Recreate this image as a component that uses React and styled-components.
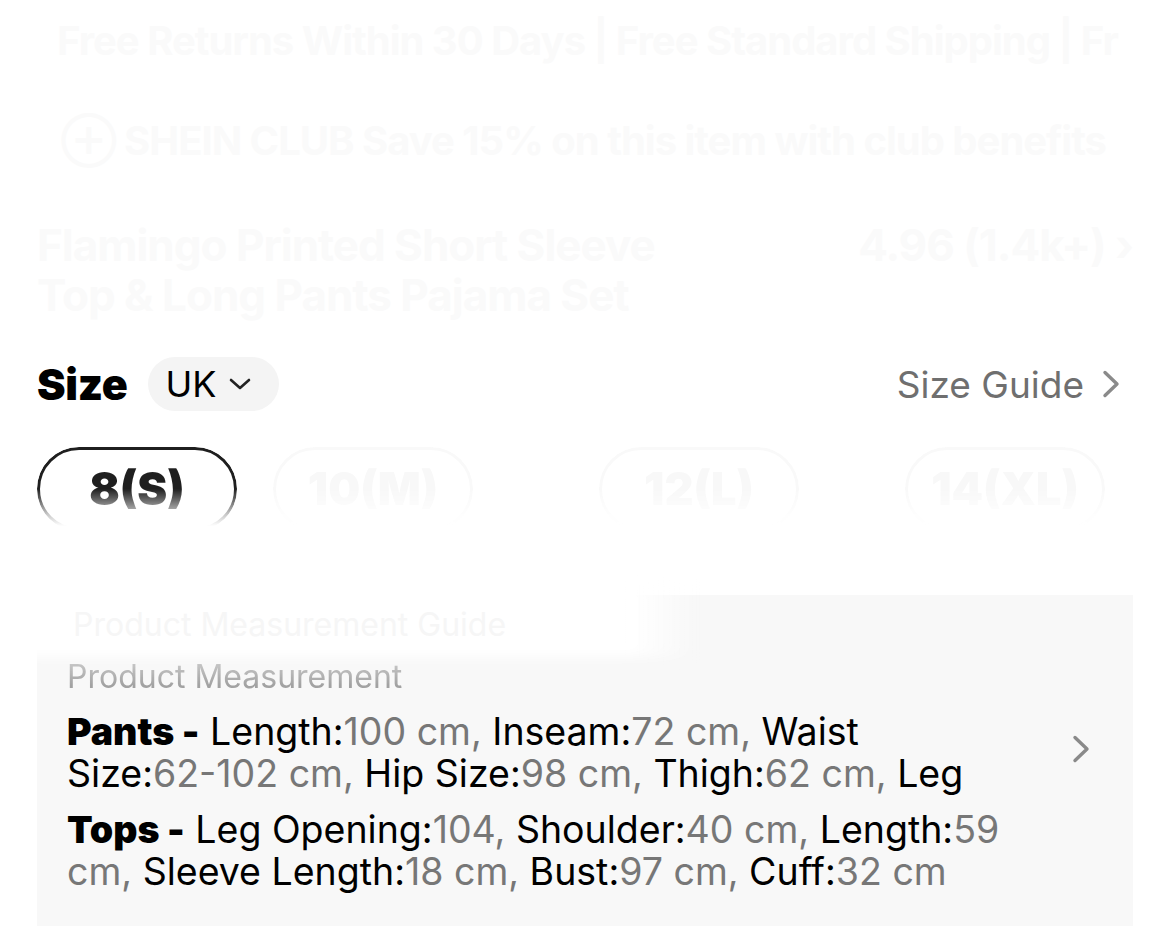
import React from "react";
import styled, { createGlobalStyle } from "styled-components";

const GlobalStyle = createGlobalStyle`
  html, body {
    margin: 0;
    padding: 0;
    background: #ffffff;
  }
  body {
    font-family: Inter, "Noto Sans", "Liberation Sans", sans-serif;
    color: #000;
  }
`;

const Page = styled.div`
  width: 1170px;
  height: 948px;
  padding: 0 37px;
  box-sizing: border-box;
  overflow: hidden;
  display: flex;
  flex-direction: column;
`;

// washed-out header text, barely visible in the shot
const Ghost = styled.div`
  color: #fafafa;
  font-size: ${(p) => p.size || 40}px;
  font-weight: 700;
  line-height: ${(p) => p.lh || 50}px;
  white-space: nowrap;
  display: flex;
  justify-content: space-between;
  padding-left: ${(p) => p.indent || 0}px;
  margin-top: ${(p) => p.top || 0}px;
  letter-spacing: -1px;
`;

const Header = styled.div`
  height: 340px;
  display: flex;
  flex-direction: column;
  padding-top: 16px;
  box-sizing: border-box;
`;

const TitleBlock = styled.div`
  margin-top: 54px;
`;

const SizeRow = styled.div`
  display: flex;
  align-items: center;
  height: 54px;
  margin-top: 17px;
`;

const SizeLabel = styled.span`
  font-size: 43px;
  font-weight: 900;
  letter-spacing: -0.3px;
  margin-right: 20px;
`;

const RegionPill = styled.button`
  display: flex;
  align-items: center;
  gap: 12px;
  height: 54px;
  padding: 0 28px 0 18px;
  border: none;
  border-radius: 27px;
  background: #f4f4f4;
  font-family: inherit;
  font-size: 36px;
  color: #000;
`;

const GuideLink = styled.a`
  margin-left: auto;
  display: flex;
  align-items: center;
  gap: 18px;
  font-size: 37px;
  color: #6f6f6f;
  margin-right: 13px;
`;

const Pills = styled.div`
  display: flex;
  gap: 36px;
  margin-top: 36px;
`;

const SizePill = styled.div`
  width: 200px;
  height: 84px;
  flex: none;
  box-sizing: border-box;
  border-radius: 42px;
  border: 3px solid ${(p) => (p.active ? "#1f1f1f" : "#f9f9f9")};
  color: ${(p) => (p.active ? "#1f1f1f" : "#f8f8f8")};
  display: flex;
  align-items: center;
  justify-content: center;
  font-size: 45px;
  font-weight: 900;
  padding-bottom: 2px;
  margin-left: ${(p) => p.shift || 0}px;
  -webkit-mask-image: linear-gradient(to bottom, #000 50%, rgba(0,0,0,0.25) 80%, transparent 94%);
  mask-image: linear-gradient(to bottom, #000 50%, rgba(0,0,0,0.25) 80%, transparent 94%);
`;

const Card = styled.div`
  position: relative;
  margin-top: 64px;
  height: 331px;
  background: #f8f8f8;
  display: flex;
  align-items: flex-start;
  padding: 62px 43px 0 30px;
  box-sizing: border-box;
`;

const CardFade = styled.div`
  position: absolute;
  left: -10px;
  top: -10px;
  width: 670px;
  height: 72px;
  background: linear-gradient(to right, #fff 90%, rgba(255,255,255,0) 100%);
  filter: blur(6px);
`;

const GhostLine = styled.div`
  position: absolute;
  left: 36px;
  top: 10px;
  font-size: 32px;
  color: #f6f6f6;
  white-space: nowrap;
`;

const CardBody = styled.div`
  width: 950px;
  position: relative;
`;

const SectionTitle = styled.div`
  font-size: 32px;
  line-height: 40px;
  color: #a2a2a2;
  -webkit-mask-image: linear-gradient(to bottom, rgba(0,0,0,0.45) 0%, #000 70%);
  mask-image: linear-gradient(to bottom, rgba(0,0,0,0.45) 0%, #000 70%);
`;

const Para = styled.p`
  margin: ${(p) => p.gap || 0}px 0 0;
  font-size: 37.5px;
  line-height: 42px;
  max-height: 84px;
  overflow: hidden;
`;

const Lead = styled.b`
  font-weight: 900;
`;

const Val = styled.span`
  color: #777777;
`;

const Keep = styled.span`
  white-space: nowrap;
`;

const Arrow = styled.div`
  margin-left: auto;
  margin-top: 78px;
  display: flex;
`;

const Chevron = ({ color = "#8a8a8a", w = 3.4 }) => (
  <svg width="18" height="28" viewBox="0 0 18 28" fill="none">
    <path d="M3 2.5 L15 14 L3 25.5" stroke={color} strokeWidth={w} strokeLinecap="round" strokeLinejoin="round" />
  </svg>
);

const Caret = () => (
  <svg width="22" height="14" viewBox="0 0 22 14" fill="none">
    <path d="M2 3 L11 11 L20 3" stroke="#222" strokeWidth="2.6" strokeLinecap="round" strokeLinejoin="round" />
  </svg>
);

const pants = [
  ["Length:", "100", " cm,"],
  ["Inseam:", "72", " cm,"],
  ["Waist Size:", "62-102", " cm,"],
  ["Hip Size:", "98", " cm,"],
  ["Thigh:", "62", " cm,"],
  ["Leg Opening:", "104", ","],
];

const tops = [
  ["Leg Opening:", "104", ","],
  ["Shoulder:", "40", " cm,"],
  ["Length:", "59", " cm,"],
  ["Sleeve Length:", "18", " cm,"],
  ["Bust:", "97", " cm,"],
  ["Cuff:", "32", " cm"],
];

const Pairs = ({ items }) =>
  items.map(([k, n, u], i) => (
    <React.Fragment key={i}>
      {" "}
      {k}
      <Val>
        <Keep>{n}</Keep>
        {u}
      </Val>
    </React.Fragment>
  ));

const App = () => {
  return (
    <Page>
      <GlobalStyle />
      <Header>
        <Ghost size={40} indent={20}>
          <span>Free Returns Within 30 Days | Free Standard Shipping | Fr</span>
        </Ghost>
        <Ghost size={40} indent={24} top={50}>
          <span>⊕ SHEIN CLUB  Save 15% on this item with club benefits</span>
        </Ghost>
        <TitleBlock>
          <Ghost size={44}>
            <span>Flamingo Printed Short Sleeve</span>
            <span>4.96 (1.4k+) ›</span>
          </Ghost>
          <Ghost size={44}>
            <span>Top & Long Pants Pajama Set</span>
          </Ghost>
        </TitleBlock>
      </Header>

      <SizeRow>
        <SizeLabel>Size</SizeLabel>
        <RegionPill>
          UK <Caret />
        </RegionPill>
        <GuideLink>
          Size Guide <Chevron />
        </GuideLink>
      </SizeRow>

      <Pills>
        <SizePill active>8(S)</SizePill>
        <SizePill>10(M)</SizePill>
        <SizePill shift={90}>12(L)</SizePill>
        <SizePill shift={70}>14(XL)</SizePill>
      </Pills>

      <Card>
        <CardFade />
        <GhostLine>Product Measurement Guide</GhostLine>
        <CardBody>
          <SectionTitle>Product Measurement</SectionTitle>
          <Para gap={14}>
            <Lead>Pants -</Lead>
            <Pairs items={pants} />
          </Para>
          <Para gap={14}>
            <Lead>Tops -</Lead>
            <Pairs items={tops} />
          </Para>
        </CardBody>
        <Arrow>
          <Chevron />
        </Arrow>
      </Card>
    </Page>
  );
};

export default App;
